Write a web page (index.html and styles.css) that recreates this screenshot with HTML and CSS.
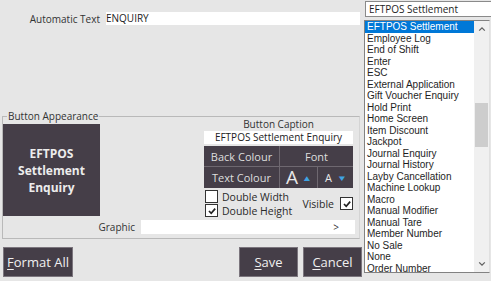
FILE: index.html
```html
<!DOCTYPE html>
<html lang="en">
<head>
  <meta charset="UTF-8">
  <title>Button Properties</title>
  <link rel="stylesheet" href="styles.css">
</head>
<body>
  <div class="window">
    <!-- left side: text, appearance group, action buttons -->
    <div class="leftside">
      <div class="auto-row">
        <label class="auto-label">Automatic Text</label>
        <div class="auto-input">ENQUIRY</div>
      </div>

      <fieldset class="appearance">
        <legend>Button Appearance</legend>
        <div class="appearance-top">
          <div class="preview">EFTPOS<br>Settlement<br>Enquiry</div>
          <div class="caption-panel">
            <div class="caption-label">Button Caption</div>
            <div class="caption-input">EFTPOS Settlement Enquiry</div>
            <div class="style-grid">
              <div class="style-btn wide">Back Colour</div>
              <div class="style-btn wide">Font</div>
              <div class="style-btn wide">Text Colour</div>
              <div class="style-btn"><span class="big-a">A</span><span class="tri">&#9650;</span></div>
              <div class="style-btn"><span class="small-a">A</span><span class="tri">&#9660;</span></div>
            </div>
            <div class="checks">
              <div class="check-col">
                <div class="check"><span class="box"></span>Double Width</div>
                <div class="check"><span class="box checked"><svg viewBox="0 0 10 10"><path d="M2 5 L4.2 7.3 L8.2 2.6" /></svg></span>Double Height</div>
              </div>
              <div class="check visible">Visible<span class="box checked"><svg viewBox="0 0 10 10"><path d="M2 5 L4.2 7.3 L8.2 2.6" /></svg></span></div>
            </div>
          </div>
        </div>
        <div class="graphic-row">
          <label class="graphic-label">Graphic</label>
          <div class="graphic-input">&gt;</div>
        </div>
      </fieldset>

      <div class="actions">
        <button class="action-btn format"><u>F</u>ormat All</button>
        <div class="spacer"></div>
        <button class="action-btn save"><u>S</u>ave</button>
        <button class="action-btn cancel"><u>C</u>ancel</button>
      </div>
    </div>

    <!-- right side: function combo and list -->
    <div class="rightside">
      <div class="combo">EFTPOS Settlement</div>
      <div class="listbox">
        <ul class="items" id="items"></ul>
        <div class="scrollbar">
          <svg class="arrow" viewBox="0 0 10 6"><path d="M1.5 5 L5 1.5 L8.5 5" /></svg>
          <div class="track"><div class="thumb"></div></div>
          <svg class="arrow" viewBox="0 0 10 6"><path d="M1.5 1 L5 4.5 L8.5 1" /></svg>
        </div>
      </div>
    </div>
  </div>

  <script>
    const functions = [
      "EFTPOS Settlement", "Employee Log", "End of Shift", "Enter", "ESC",
      "External Application", "Gift Voucher Enquiry", "Hold Print", "Home Screen",
      "Item Discount", "Jackpot", "Journal Enquiry", "Journal History",
      "Layby Cancellation", "Machine Lookup", "Macro", "Manual Modifier",
      "Manual Tare", "Member Number", "No Sale", "None", "Order Number"
    ];

    const list = document.getElementById("items");
    functions.forEach((name, i) => {
      const li = document.createElement("li");
      li.textContent = name;
      if (i === 0) li.classList.add("selected");
      list.appendChild(li);
    });
  </script>
</body>
</html>
```

FILE: styles.css
```css
/* General styles */
body {
  margin: 0;
  padding: 0;
  background-color: #e6e6e6;
  font-family: "Open Sans", "Noto Sans", sans-serif;
  font-size: 10px;
  color: #1e1e1e;
}

.window {
  display: flex;
  width: 491px;
  height: 281px;
  overflow: hidden;
}

/* Left side */
.leftside {
  width: 363px;
  flex-shrink: 0;
}

.auto-row {
  display: flex;
  align-items: center;
  margin-top: 12px;
  height: 13px;
}

.auto-label {
  width: 100px;
  text-align: right;
  margin-right: 6px;
  color: #333;
}

.auto-input {
  width: 254px;
  height: 13px;
  line-height: 13px;
  background-color: #fff;
  color: #222;
}

/* Group box */
.appearance {
  margin: 85px 3px 0 2px;
  padding: 0 0 4px 0;
  border: 1px solid #b9b9b9;
  border-right-color: #d4d4d4;
}

.appearance legend {
  padding: 0 1px;
  margin-left: 4px;
  line-height: 13px;
  color: #333;
}

.appearance-top {
  display: flex;
  margin-top: -6px;
}

.preview {
  width: 97px;
  height: 92px;
  margin: 7px 0 0 0;
  background-color: #453e48;
  color: #ececec;
  font-weight: bold;
  font-size: 12px;
  line-height: 17px;
  display: flex;
  align-items: center;
  justify-content: center;
  text-align: center;
}

.caption-panel {
  width: 149px;
  margin-left: 104px;
}

.caption-label {
  height: 13px;
  line-height: 13px;
  text-align: center;
  margin-top: 1px;
  color: #333;
}

.caption-input {
  height: 13px;
  line-height: 13px;
  background-color: #fff;
  text-align: center;
  color: #222;
}

.style-grid {
  display: grid;
  grid-template-columns: 37px 37px 37px 35px;
  grid-template-rows: 20px 21px;
  gap: 1px;
  margin-top: 2px;
  background-color: #6e6870;
}

.style-btn {
  background-color: #453e48;
  color: #dedede;
  font-size: 11px;
  display: flex;
  align-items: center;
  justify-content: center;
}

.style-btn.wide {
  grid-column: span 2;
}

.style-btn:nth-child(2) {
  grid-column: 3 / span 2;
}

.big-a {
  font-size: 19px;
  line-height: 19px;
  margin-right: 5px;
  color: #e8e8e8;
}

.small-a {
  font-size: 11px;
  margin-right: 6px;
  color: #e8e8e8;
}

.tri {
  color: #3fa3e3;
  font-size: 8px;
  transform: scaleX(1.3);
}

/* Checkboxes */
.checks {
  display: flex;
  margin-top: 2px;
}

.check-col {
  display: flex;
  flex-direction: column;
  gap: 1px;
}

.check {
  display: flex;
  align-items: center;
  height: 13px;
  font-size: 10.5px;
  color: #2a2a2a;
}

.box {
  width: 11px;
  height: 11px;
  border: 1px solid #333;
  background-color: #fff;
  margin: 0 4px 0 1px;
  display: flex;
  align-items: center;
  justify-content: center;
}

.box svg {
  width: 10px;
  height: 10px;
}

.box svg path {
  fill: none;
  stroke: #222;
  stroke-width: 1.7;
}

.check.visible {
  margin: 7px 0 0 auto;
}

.check.visible .box {
  margin: 0 0 0 6px;
}

/* Graphic row */
.graphic-row {
  display: flex;
  align-items: center;
  margin-top: 3px;
  height: 14px;
}

.graphic-label {
  width: 132px;
  text-align: right;
  margin-right: 6px;
  color: #333;
}

.graphic-input {
  width: 214px;
  height: 14px;
  line-height: 14px;
  background-color: #fff;
  text-align: right;
  box-sizing: border-box;
  padding-right: 16px;
  color: #333;
}

/* Action buttons */
.actions {
  display: flex;
  margin-top: 8px;
  padding-left: 3px;
}

.spacer {
  flex: 1;
}

.action-btn {
  height: 30px;
  background-color: #453e48;
  border: 1px solid #7b757d;
  color: #f0f0f0;
  font-family: "Open Sans", "Noto Sans", sans-serif;
  font-size: 13px;
  padding: 0;
}

.action-btn u {
  text-underline-offset: 2px;
}

.format {
  width: 70px;
}

.save {
  width: 59px;
  margin-right: 5px;
}

.cancel {
  width: 59px;
  margin-right: 1px;
}

/* Right side */
.rightside {
  width: 128px;
  flex-shrink: 0;
  margin-left: 1px;
}

.combo {
  margin: 1px 0 0 1px;
  height: 16px;
  line-height: 15px;
  box-sizing: border-box;
  border: 1px solid #8a8a8a;
  border-right: 0;
  background-color: #fff;
  padding-left: 3px;
  color: #1e1e1e;
}

.listbox {
  display: flex;
  margin-top: 3px;
  width: 126px;
  height: 253px;
  box-sizing: border-box;
  border: 1px solid #828282;
  border-right-color: #e0e0e0;
  background-color: #fff;
}

.items {
  flex: 1;
  list-style: none;
  margin: 0;
  padding: 0;
  font-family: "Liberation Sans", Arial, sans-serif;
}

.items li {
  height: 11.5px;
  line-height: 11.5px;
  padding-left: 2px;
  white-space: nowrap;
  color: #1e1e1e;
}

.items li.selected {
  background-color: #0078d7;
  color: #fff;
}

.scrollbar {
  width: 15px;
  background-color: #f0f0f0;
  display: flex;
  flex-direction: column;
  align-items: center;
}

.arrow {
  width: 8px;
  height: 6px;
  margin: 5px 0;
}

.arrow path {
  fill: none;
  stroke: #606060;
  stroke-width: 1.6;
}

.track {
  flex: 1;
  width: 100%;
  padding-top: 66px;
}

.thumb {
  width: 13px;
  margin: 0 auto;
  height: 44px;
  background-color: #cdcdcd;
}
```
